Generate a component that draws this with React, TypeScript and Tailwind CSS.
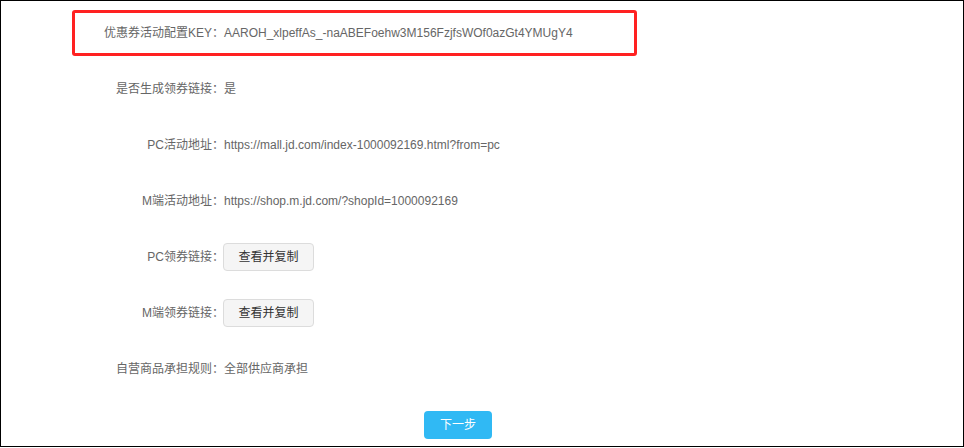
const rows: { label: string; value?: string; button?: boolean }[] = [
  { label: "是否生成领券链接：", value: "是" },
  { label: "PC活动地址：", value: "https://mall.jd.com/index-1000092169.html?from=pc" },
  { label: "M端活动地址：", value: "https://shop.m.jd.com/?shopId=1000092169" },
  { label: "PC领券链接：", button: true },
  { label: "M端领券链接：", button: true },
  { label: "自营商品承担规则：", value: "全部供应商承担" },
];

const App = () => {
  return (
    <div
      className="h-[448px] w-[964px] overflow-hidden bg-white text-[12px] text-[#666]"
      style={{ fontFamily: '"Liberation Sans", Arial, "Noto Sans CJK SC", sans-serif' }}
    >
      <div className="flex h-[447px] flex-col border border-black pt-[4px]">
        <div className="flex h-[56px] items-center pl-[71px]">
          <div className="flex h-[46px] w-[565px] items-center rounded-[3px] border-[3px] border-[#ff2121]">
            <div className="w-[149px] text-right">优惠券活动配置KEY：</div>
            <div>AAROH_xlpeffAs_-naABEFoehw3M156FzjfsWOf0azGt4YMUgY4</div>
          </div>
        </div>

        {rows.map((row) => (
          <div key={row.label} className="flex h-[56px] items-center pl-[71px]">
            <div className="w-[152px] text-right">{row.label}</div>
            {row.button ? (
              <button className="ml-[-1px] h-[28px] w-[91px] rounded-[4px] border border-[#dcdcdc] bg-[#f5f5f5] text-[12px] text-[#333]">
                查看并复制
              </button>
            ) : (
              <div>{row.value}</div>
            )}
          </div>
        ))}

        <div className="mt-[14px] flex pl-[423px]">
          <button className="h-[28px] w-[68px] rounded-[4px] bg-[#30b9f4] text-[12px] text-white">
            下一步
          </button>
        </div>
      </div>
    </div>
  );
};

export default App;
